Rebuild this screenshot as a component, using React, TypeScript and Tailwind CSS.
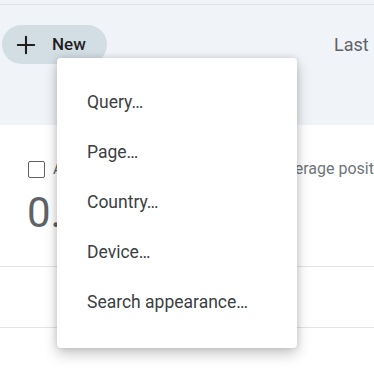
import { Plus } from "lucide-react";

const items = ["Query…", "Page…", "Country…", "Device…", "Search appearance…"];

export default function App() {
  return (
    <div
      className="relative w-[374px] h-[375px] overflow-hidden bg-white"
      style={{ fontFamily: "Roboto, 'Liberation Sans', sans-serif" }}
    >
      {/* header strip */}
      <div className="h-[125px] bg-[#f0f4f9]">
        <div className="h-[4px]" />
        <div className="h-px bg-[#dde2e8]" />
        <div className="flex items-center justify-between pt-[20px]">
          <button className="ml-[2px] flex h-[39px] w-[105px] items-center gap-[12px] rounded-full bg-[#d3dde4] pl-[10px] text-[17px] font-medium text-[#1f1f1f]">
            <Plus size={28} strokeWidth={1.8} className="text-[#1f1f1f]" />
            New
          </button>
          <span className="w-[40px] whitespace-nowrap text-[18px] text-[#5f6368]">Last</span>
        </div>
      </div>

      {/* metrics */}
      <div className="pt-[32px]">
        <div className="flex items-center whitespace-nowrap pl-[28px]">
          <div className="flex w-[249px] shrink-0 items-center gap-[8px]">
            <span className="block h-[17px] w-[17px] rounded-[2px] border-[1.5px] border-[#5f6368]" />
            <span className="text-[15px] text-[#5f6368]">Average CTR</span>
          </div>
          <span className="shrink-0 text-[16px] text-[#70757a]">Average position</span>
        </div>
        <div className="mt-[8px] pl-[27px] text-[42px] leading-[48px] text-[#5f6368]">0.0</div>
      </div>
      <div className="mt-[29px] h-px bg-[#e3e3e3]" />
      <div className="mt-[60px] h-px bg-[#e3e3e3]" />

      {/* dropdown menu */}
      <div className="absolute left-[57px] top-[58px] w-[240px] h-[290px] rounded-[4px] bg-white pt-[19px] shadow-[0_6px_14px_rgba(0,0,0,0.22),0_0_6px_rgba(0,0,0,0.12)]">
        {items.map((label) => (
          <div
            key={label}
            className="flex h-[50px] items-center px-[30px] text-[17.5px] text-[#3c4043]"
          >
            {label}
          </div>
        ))}
      </div>
    </div>
  );
}
